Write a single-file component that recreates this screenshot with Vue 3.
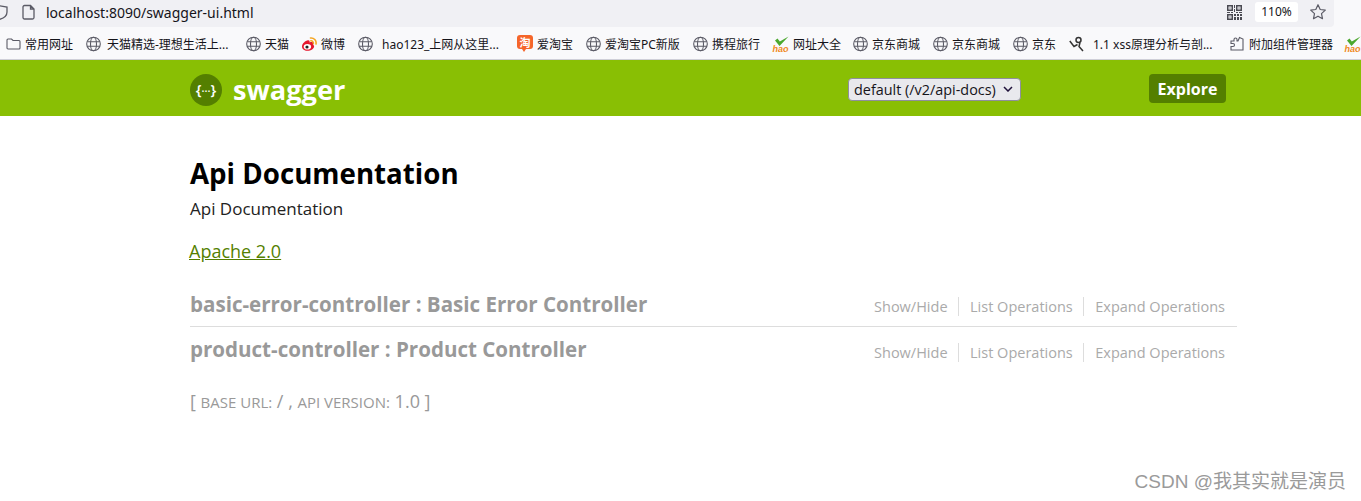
<script setup>
const bookmarks = [
  { icon: 'folder', label: '常用网址', width: 80, textGap: 4 },
  { icon: 'globe', label: '天猫精选-理想生活上...', width: 160, textGap: 6 },
  { icon: 'globe', label: '天猫', width: 55, textGap: 4 },
  { icon: 'weibo', label: '微博', width: 57, textGap: 4 },
  { icon: 'globe', label: 'hao123_上网从这里...', width: 159, textGap: 9 },
  { icon: 'taobao', label: '爱淘宝', width: 69, textGap: 4 },
  { icon: 'globe', label: '爱淘宝PC新版', width: 107, textGap: 4 },
  { icon: 'globe', label: '携程旅行', width: 79, textGap: 4 },
  { icon: 'hao', label: '网址大全', width: 81, textGap: 4 },
  { icon: 'globe', label: '京东商城', width: 80, textGap: 4 },
  { icon: 'globe', label: '京东商城', width: 80, textGap: 4 },
  { icon: 'globe', label: '京东', width: 56, textGap: 4 },
  { icon: 'xss', label: '1.1 xss原理分析与剖...', width: 161, textGap: 8 },
  { icon: 'addon', label: '附加组件管理器', width: 114, textGap: 4 },
  { icon: 'hao', label: '', width: 17, textGap: 0 }
]
const controllers = [
  { name: 'basic-error-controller : Basic Error Controller' },
  { name: 'product-controller : Product Controller' }
]
</script>

<template>
  <div class="page">
    <div class="chrome">
      <div class="urlbar">
        <svg class="shield" width="10" height="20" viewBox="0 0 10 20"><path d="M-3 3.500 L7 5 V10 C7 14 3 16.500 -1 17.500" fill="none" stroke="#5b5b66" stroke-width="1.300"/></svg>
        <svg class="page-ic" width="14" height="16" viewBox="0 0 14 16"><path d="M2.500 1.500h6l3.500 3.500v8.500a1.500 1.500 0 0 1-1.500 1.500h-8A1.500 1.500 0 0 1 1 13.500V3a1.500 1.500 0 0 1 1.500-1.500zM8.500 1.500V5H12" fill="none" stroke="#5b5b66" stroke-width="1.300"/></svg>
        <span class="url">localhost:8090/swagger-ui.html</span>
        <span class="url-right">
          <svg width="15" height="15" viewBox="0 0 15 15" fill="#4a4a52"><path d="M0 0h6v6H0zM1.500 1.500v3h3v-3zM9 0h6v6H9zM10.500 1.500v3h3v-3zM0 9h6v6H0zM1.500 10.500v3h3v-3zM2.500 2.500h1v1h-1zM11.500 2.500h1v1h-1zM2.500 11.500h1v1h-1zM7 0h1v3H7zM7 4h1v3H7zM0 7h3v1H0zM4 7h2v1H4zM9 7h2v1H9zM12 7h3v1h-3zM7 9h2v2H7zM10 9h2v2h-2zM13 9h2v2h-2zM7 12h2v3H7zM10 12h2v3h-2zM13 12h2v3h-2z"/></svg>
          <span class="zoom-pill">110%</span>
          <svg width="18" height="18" viewBox="0 0 18 18"><path d="M9 1.700l2.200 4.800 5.100.6-3.800 3.500 1 5.100L9 13.200l-4.500 2.500 1-5.100L1.700 7.100l5.100-.6z" fill="none" stroke="#5b5b66" stroke-width="1.200" stroke-linejoin="round"/></svg>
        </span>
      </div>
      <div class="bookmarks">
        <div v-for="(b, i) in bookmarks" :key="i" class="bm" :style="{ width: b.width + 'px', gap: b.textGap + 'px' }">
          <svg v-if="b.icon === 'folder'" class="ic" width="15" height="16" viewBox="0 0 15 16"><path d="M1 4a1 1 0 0 1 1-1h3.500l1.500 1.500h6a1 1 0 0 1 1 1V12a1 1 0 0 1-1 1H2a1 1 0 0 1-1-1z" fill="none" stroke="#5b5b66" stroke-width="1.100"/></svg>
          <svg v-else-if="b.icon === 'globe'" class="ic" width="15" height="16" viewBox="0 0 15 16" fill="none" stroke="#5b5b66" stroke-width="1.100"><circle cx="7.500" cy="8" r="6.800"/><ellipse cx="7.500" cy="8" rx="3" ry="6.800"/><path d="M1.200 5.700h12.600M1.200 10.300h12.600"/></svg>
          <svg v-else-if="b.icon === 'weibo'" class="ic" width="16" height="16" viewBox="0 0 16 16"><path d="M1 10.500C1 7.500 4.500 4.500 7 4.200c1.500-.2 2 1 1.500 2.300 2-.8 3.700-.5 3.700 1 0 .5-.2 1-.4 1.300 1 .3 1.300 1 1.300 1.700 0 2-3 4.300-6.800 4.300C3.300 14.800 1 13 1 10.500z" fill="#e6162d"/><ellipse cx="6.400" cy="10.800" rx="3.700" ry="2.800" fill="#fff"/><circle cx="6" cy="11" r="1.600" fill="#222"/><path d="M9.500 2a5 5 0 0 1 5.500 6" fill="none" stroke="#f5a623" stroke-width="1.600" stroke-linecap="round"/><path d="M9.800 4.800a2.400 2.400 0 0 1 2.600 3" fill="none" stroke="#f5a623" stroke-width="1.400" stroke-linecap="round"/></svg>
          <span v-else-if="b.icon === 'taobao'" class="ic tb"><span class="tb-c">淘</span></span>
          <span v-else-if="b.icon === 'hao'" class="ic hao">
            <svg width="16" height="10" viewBox="0 0 16 10"><path d="M2 4.500 6.500 10 15.500 0.500 6.800 5.500 4.500 2.500z" fill="#4ba82e"/></svg>
            <span class="hao-t">hao</span>
          </span>
          <svg v-else-if="b.icon === 'xss'" class="ic" width="16" height="16" viewBox="0 0 16 16" fill="none" stroke="#333" stroke-width="1.500"><path d="M0.800 5 5 10.500 8.500 8.500"/><circle cx="9.500" cy="4" r="2.500"/><path d="M11 6.500 10 10.500 14 15"/></svg>
          <svg v-else class="ic" width="15" height="16" viewBox="0 0 15 16" fill="none" stroke="#5b5b66" stroke-width="1.100"><path d="M1 5h3V3.500a1.500 1.500 0 0 1 3 0V5h1l1.500-3.500L13 3v11H1V10.500h2a1.500 1.500 0 0 0 0-3H1z"/></svg>
          <span v-if="b.label" class="bm-t">{{ b.label }}</span>
        </div>
      </div>
    </div>

    <header class="sw-header">
      <div class="wrap head-row">
        <div class="logo">
          <span class="logo-c">{<i>···</i>}</span>
          <span class="logo-t">swagger</span>
        </div>
        <div class="select">
          <span>default (/v2/api-docs)</span>
          <svg width="10" height="6" viewBox="0 0 10 6"><path d="M1 1l4 4 4-4" fill="none" stroke="#20123a" stroke-width="1.500"/></svg>
        </div>
        <a class="explore">Explore</a>
      </div>
    </header>

    <main class="wrap content">
      <h1>Api Documentation</h1>
      <p class="desc">Api Documentation</p>
      <a class="lic">Apache 2.0</a>
      <section v-for="(c, i) in controllers" :key="c.name" class="ctrl" :class="{ first: i === 0 }">
        <h2>{{ c.name }}</h2>
        <ul>
          <li>Show/Hide</li>
          <li>List Operations</li>
          <li>Expand Operations</li>
        </ul>
      </section>
      <p class="base">[ <span class="sm">BASE URL:</span> / , <span class="sm">API VERSION:</span> 1.0 ]</p>
    </main>

    <div class="mark">CSDN @我其实就是演员</div>
  </div>
</template>

<style scoped>
.page {
  position: relative;
  width: 1361px;
  height: 501px;
  overflow: hidden;
  background: #fff;
  font-family: "Open Sans", "Noto Sans CJK SC", sans-serif;
}
.chrome {
  height: 60px;
  background: #f9f9fb;
  border-bottom: 1px solid #cfcfd8;
  box-sizing: border-box;
}
.urlbar {
  width: 1334px;
  height: 27px;
  background: #f0f0f4;
  border-radius: 0 0 4px 0;
  display: flex;
  align-items: center;
  box-sizing: border-box;
  padding-bottom: 5px;
  padding-top: 2px;
}
.shield { flex: none; }
.page-ic { flex: none; margin-left: 12px; }
.url {
  margin-left: 10px;
  font: 14px "Noto Sans", "Open Sans", sans-serif;
  color: #15141a;
}
.url-right {
  margin-left: auto;
  display: flex;
  align-items: center;
  padding-right: 7px;
}
.zoom-pill {
  margin-left: 13px;
  margin-right: 11px;
  width: 43px;
  height: 20px;
  background: #fff;
  border-radius: 3px;
  text-align: center;
  font: 12px/20px "Noto Sans", sans-serif;
  color: #15141a;
}
.bookmarks {
  display: flex;
  height: 32px;
  align-items: center;
  padding-left: 6px;
  padding-top: 2px;
  box-sizing: border-box;
  white-space: nowrap;
}
.bm {
  display: flex;
  align-items: center;
  flex: none;
  overflow: hidden;
}
.ic { flex: none; }
.bm-t {
  font: 12px "Noto Sans", "Noto Sans CJK SC", sans-serif;
  color: #15141a;
}
.tb {
  position: relative;
  width: 16px;
  height: 18px;
  overflow: hidden;
}
.tb-c {
  display: block;
  width: 16px;
  height: 14px;
  background: #f5652a;
  border-radius: 3px;
  color: #fff;
  font: bold 11px/14px "Noto Sans CJK SC", sans-serif;
  text-align: center;
}
.tb::after {
  content: "";
  position: absolute;
  left: 5px;
  top: 14px;
  border-left: 2px solid transparent;
  border-right: 2px solid transparent;
  border-top: 3px solid #f5652a;
}
.hao {
  width: 17px;
  height: 17px;
  display: flex;
  flex-direction: column;
  align-items: center;
}
.hao svg { display: block; flex: none; }
.hao-t {
  font: italic bold 9px/7px "Liberation Sans", sans-serif;
  color: #f08a1d;
}
.sw-header {
  height: 56px;
  background: #89bf04;
}
.wrap {
  margin-left: 190px;
  width: 1047px;
}
.head-row {
  height: 56px;
  display: flex;
  align-items: center;
}
.logo {
  display: flex;
  align-items: center;
  width: 658px;
  margin-top: 3px;
}
.logo-c {
  width: 32px;
  height: 32px;
  border-radius: 50%;
  background: #547f00;
  color: #fff;
  font: 600 15px/30px "Open Sans", sans-serif;
  text-align: center;
}
.logo-c i {
  font-style: normal;
  font-size: 11px;
}
.logo-t {
  margin-left: 11px;
  font-size: 27.200px;
  line-height: 32px;
  font-weight: 700;
  color: #fff;
}
.select {
  width: 173px;
  height: 23px;
  margin-top: 2px;
  box-sizing: border-box;
  background: #e9e9ed;
  border: 1px solid #8f8f9d;
  border-radius: 4px;
  display: flex;
  align-items: center;
  justify-content: space-between;
  padding: 0 7px 0 5px;
  font-size: 14.400px;
  color: #15141a;
}
.explore {
  margin-left: 128px;
  width: 77px;
  height: 29px;
  background: #547f00;
  border-radius: 4px;
  color: #fff;
  font-weight: 700;
  font-size: 16px;
  line-height: 30px;
  text-align: center;
}
.content {
  padding-top: 36px;
}
h1 {
  margin: 0;
  font-size: 27.700px;
  line-height: 42px;
  font-weight: 700;
  color: #000;
}
.desc {
  margin: 3px 0 0;
  font-size: 17px;
  line-height: 24px;
  color: #222;
}
.lic {
  display: block;
  margin-top: 18px;
  margin-left: -1px;
  font-size: 18px;
  line-height: 24px;
  color: #547f00;
  text-decoration: underline;
}
.ctrl {
  display: flex;
  justify-content: space-between;
  align-items: flex-start;
  height: 45px;
  box-sizing: border-box;
  padding-top: 9px;
}
.ctrl.first {
  margin-top: 19px;
  border-bottom: 1px solid #ddd;
}
h2 {
  margin: -1px 0 0;
  font-size: 20.550px;
  line-height: 28px;
  font-weight: 700;
  color: #999;
}
ul {
  list-style: none;
  margin: 7px 12px 0 0;
  padding: 0;
  display: flex;
}
.first ul {
  margin-top: 6px;
}
li {
  font-size: 14.500px;
  line-height: 19px;
  color: #aaa;
  padding: 0 10.500px 0 11px;
  border-right: 1px solid #ddd;
}
li:last-child {
  border-right: 0;
  padding-right: 0;
}
.base {
  margin: 17px 0 0;
  font-size: 18px;
  line-height: 24px;
  color: #999;
}
.sm { font-size: 15px; }
.mark {
  position: absolute;
  right: 15px;
  bottom: 8px;
  font: 19px "Liberation Sans", "Noto Sans CJK SC", sans-serif;
  color: #9a9a9a;
}
</style>
